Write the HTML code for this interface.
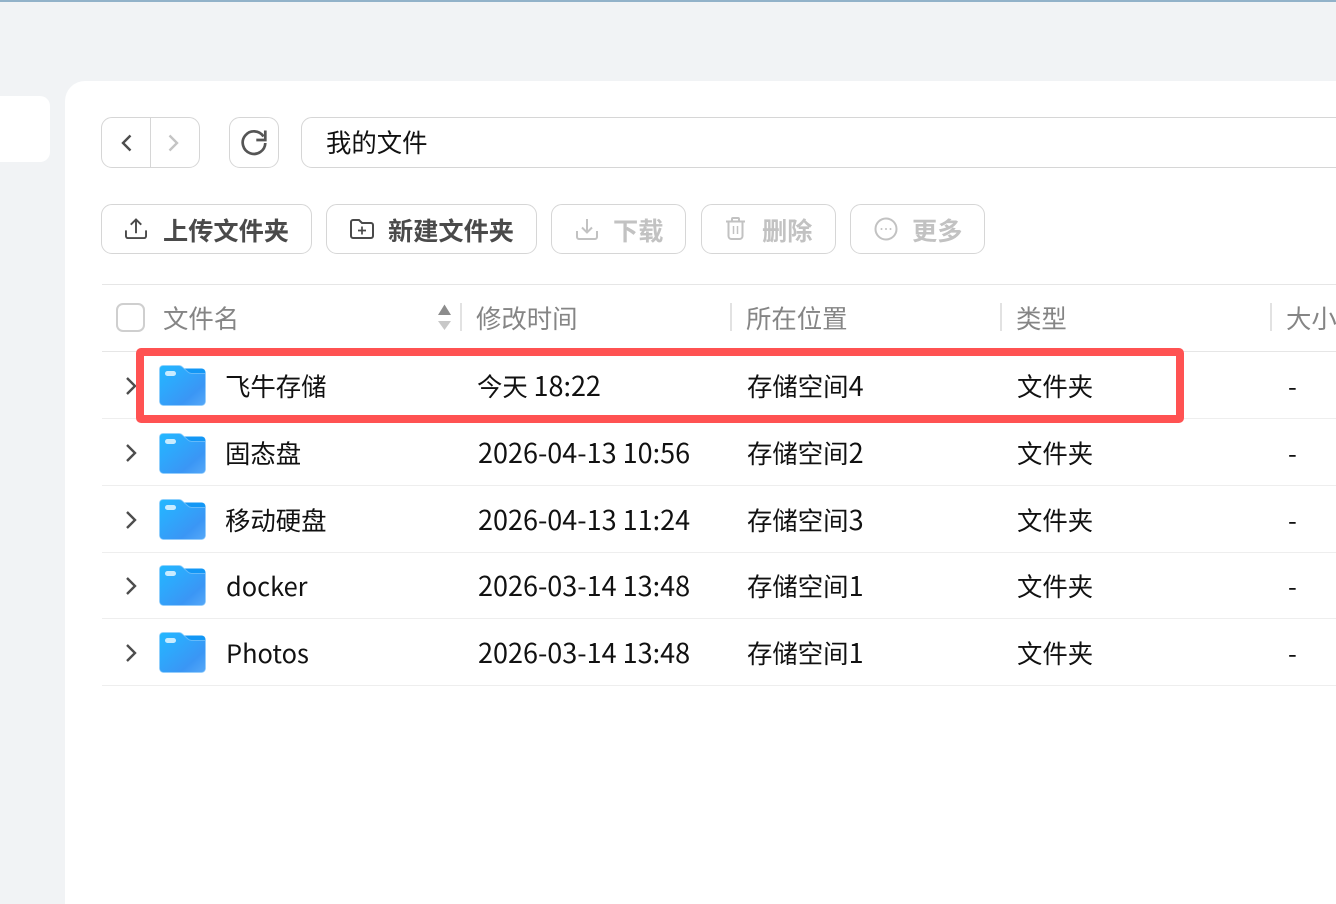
<!DOCTYPE html>
<html lang="zh-CN">
<head>
<meta charset="utf-8">
<title>我的文件</title>
<style>
html,body{margin:0;padding:0;height:904px;overflow:hidden}
body{width:1336px;background:#f1f3f5;position:relative;font-family:"Noto Sans CJK SC","Liberation Sans",sans-serif;color:#111}
#p{position:absolute;left:0;top:0;width:1336px;height:904px;overflow:hidden}
.a{position:absolute}
.t{position:absolute;white-space:nowrap;font-size:25.4px;line-height:34px;height:34px}
.n{font-size:27px;line-height:1}
.t.n{line-height:34px}
.btn{font-weight:700;color:#4a4a4a;font-size:25.2px}
.box{position:absolute;box-sizing:border-box;border:1px solid #d6d6d6;border-radius:11px;background:#fff}
.dis{color:#c2c2c2}
.h{color:#858585}
.line{position:absolute;left:102px;width:1234px;height:1px;background:#eeeeee}
.sep{position:absolute;top:303px;width:2px;height:28px;background:#e2e2e2}
svg{position:absolute;overflow:visible}
</style>
</head>
<body>
<div id="p">
<svg width="0" height="0" style="position:absolute">
<defs>
<linearGradient id="fg" x1="0" y1="0" x2="1" y2="1">
<stop offset="0" stop-color="#22b8ff"/>
<stop offset=".35" stop-color="#2ea8fc"/>
<stop offset=".72" stop-color="#3a96f5"/>
<stop offset="1" stop-color="#56a8f8"/>
</linearGradient>
<symbol id="folder" viewBox="0 0 47 41">
<path d="M24 3.500H42.500a4 4 0 0 1 4 4v6H24z" fill="#1397f5"/>
<path d="M4 .5H20c1.500 0 2.500.5 3.500 1.500L29 7c1.200 1 2.200 1.500 3.500 1.500H46.500V36.500a4 4 0 0 1-4 4H4.500a4 4 0 0 1-4-4V4a3.500 3.500 0 0 1 3.500-3.500z" fill="url(#fg)" stroke="#8fcdfc" stroke-opacity=".6"/>
<rect x="6" y="6" width="11" height="5" rx="2.500" fill="#c8ecff"/>
</symbol>
<symbol id="chev" viewBox="0 0 12 20">
<path d="M2 2l8 8-8 8" fill="none" stroke="#4d4d4d" stroke-width="2.400"/>
</symbol>
</defs>
</svg>

<div class="a" style="left:0;top:0;width:1336px;height:2px;background:#92b2c9"></div>
<div class="a" style="left:-20px;top:96px;width:70px;height:66px;background:#fff;border-radius:10px"></div>
<div class="a" style="left:65px;top:81px;width:1271px;height:823px;background:#fff;border-radius:20px 0 0 0"></div>

<!-- nav -->
<div class="box" style="left:101px;top:117px;width:99px;height:51px"></div>
<div class="a" style="left:150px;top:117px;width:1px;height:51px;background:#d6d6d6"></div>
<svg style="left:121px;top:134px" width="11" height="18" viewBox="0 0 11 18"><path d="M9.500 1.500L2 9l7.500 7.500" fill="none" stroke="#4d4d4d" stroke-width="2.400"/></svg>
<svg style="left:168px;top:134px" width="11" height="18" viewBox="0 0 11 18"><path d="M1.500 1.500L9 9l-7.500 7.500" fill="none" stroke="#c4c4c4" stroke-width="2.400"/></svg>
<div class="box" style="left:229px;top:117px;width:50px;height:51px"></div>
<svg style="left:241px;top:129px" width="26" height="27" viewBox="0 0 26 27" fill="none" stroke="#555" stroke-width="2.700"><path d="M22.500 7.500A11.300 11.300 0 1 0 24.300 14"/><path d="M24.300 1.500v9.500h-9"/></svg>
<div class="box" style="left:301px;top:117px;width:1100px;height:51px"></div>
<div class="t" style="left:326px;top:125px">我的文件</div>

<!-- toolbar -->
<div class="box" style="left:101px;top:204px;width:211px;height:50px"></div>
<svg style="left:125px;top:218px" width="22" height="22" viewBox="0 0 23 23" fill="none" stroke="#4a4a4a" stroke-width="2"><path d="M1 13v6a2 2 0 0 0 2 2h17a2 2 0 0 0 2-2v-6"/><path d="M11.500 16V2M6 7l5.500-5.500L17 7"/></svg>
<div class="t btn" style="left:163px;top:213px">上传文件夹</div>

<div class="box" style="left:326px;top:204px;width:211px;height:50px"></div>
<svg style="left:350px;top:219px" width="24" height="20" viewBox="0 0 24 20" fill="none" stroke="#4a4a4a" stroke-width="2"><path d="M1 3a2 2 0 0 1 2-2h6l3 3h9a2 2 0 0 1 2 2v11a2 2 0 0 1-2 2H3a2 2 0 0 1-2-2z"/><path d="M12 7.500v8M8 11.500h8" stroke-width="1.700"/></svg>
<div class="t btn" style="left:388px;top:213px">新建文件夹</div>

<div class="box" style="left:551px;top:204px;width:135px;height:50px"></div>
<svg style="left:576px;top:218px" width="22" height="22" viewBox="0 0 22 22" fill="none" stroke="#c2c2c2" stroke-width="2"><path d="M1 13v6a2 2 0 0 0 2 2h16a2 2 0 0 0 2-2v-6"/><path d="M11 1v13M6 9.500l5 5 5-5"/></svg>
<div class="t btn dis" style="left:613px;top:213px">下载</div>

<div class="box" style="left:701px;top:204px;width:135px;height:50px"></div>
<svg style="left:725px;top:217px" width="21" height="23" viewBox="0 0 21 23" fill="none" stroke="#c2c2c2" stroke-width="2"><path d="M1 4.500h19M7 4.500V2a1 1 0 0 1 1-1h5a1 1 0 0 1 1 1v2.500"/><path d="M3.500 4.500V19a3 3 0 0 0 3 3h8a3 3 0 0 0 3-3V4.500"/><path d="M8.500 9v8M12.500 9v8" stroke-width="1.500"/></svg>
<div class="t btn dis" style="left:762px;top:213px">删除</div>

<div class="box" style="left:850px;top:204px;width:135px;height:50px"></div>
<svg style="left:874px;top:217px" width="24" height="24" viewBox="0 0 24 24" fill="none" stroke="#c2c2c2"><circle cx="12" cy="12" r="10.500" stroke-width="2"/><circle cx="7.500" cy="12" r="1" fill="#c2c2c2" stroke="none"/><circle cx="12" cy="12" r="1" fill="#c2c2c2" stroke="none"/><circle cx="16.500" cy="12" r="1" fill="#c2c2c2" stroke="none"/></svg>
<div class="t btn dis" style="left:912px;top:213px">更多</div>

<!-- header -->
<div class="line" style="top:284px;background:#e6e6e6"></div>
<div class="a" style="left:116px;top:303px;width:29px;height:29px;box-sizing:border-box;border:2px solid #cfcfcf;border-radius:7px;background:#fff"></div>
<div class="t h" style="left:163px;top:301px">文件名</div>
<svg style="left:438px;top:304px" width="13" height="26" viewBox="0 0 13 26"><path d="M6.500 .5L13 11H0z" fill="#8c8c8c"/><path d="M0 17h13L6.500 26z" fill="#c8c8c8"/></svg>
<div class="sep" style="left:460px"></div>
<div class="t h" style="left:476px;top:301px">修改时间</div>
<div class="sep" style="left:730px"></div>
<div class="t h" style="left:746px;top:301px">所在位置</div>
<div class="sep" style="left:1000px"></div>
<div class="t h" style="left:1016px;top:301px">类型</div>
<div class="sep" style="left:1270px"></div>
<div class="t h" style="left:1286px;top:301px">大小</div>

<div class="line" style="top:351px;background:#e6e6e6"></div>
<div class="line" style="top:418px"></div>
<div class="line" style="top:485px"></div>
<div class="line" style="top:552px"></div>
<div class="line" style="top:618px"></div>
<div class="line" style="top:685px"></div>

<!-- row 1 -->
<svg style="left:125px;top:376px" width="12" height="20"><use href="#chev"/></svg>
<svg style="left:159px;top:365px" width="47" height="41"><use href="#folder"/></svg>
<div class="t" style="left:225px;top:368.500px">飞牛存储</div>
<div class="t" style="left:477px;top:368.500px">今天 <span class="n">18:22</span></div>
<div class="t" style="left:747px;top:368.500px">存储空间<span class="n">4</span></div>
<div class="t" style="left:1017px;top:368.500px">文件夹</div>
<div class="t" style="left:1288px;top:368.500px">-</div>

<!-- row 2 -->
<svg style="left:125px;top:443px" width="12" height="20"><use href="#chev"/></svg>
<svg style="left:159px;top:433px" width="47" height="41"><use href="#folder"/></svg>
<div class="t" style="left:225px;top:435.500px">固态盘</div>
<div class="t n" style="left:478px;top:435px">2026-04-13 10:56</div>
<div class="t" style="left:747px;top:435.500px">存储空间<span class="n">2</span></div>
<div class="t" style="left:1017px;top:435.500px">文件夹</div>
<div class="t" style="left:1288px;top:435.500px">-</div>

<!-- row 3 -->
<svg style="left:125px;top:510px" width="12" height="20"><use href="#chev"/></svg>
<svg style="left:159px;top:499px" width="47" height="41"><use href="#folder"/></svg>
<div class="t" style="left:225px;top:502.500px">移动硬盘</div>
<div class="t n" style="left:478px;top:502px">2026-04-13 11:24</div>
<div class="t" style="left:747px;top:502.500px">存储空间<span class="n">3</span></div>
<div class="t" style="left:1017px;top:502.500px">文件夹</div>
<div class="t" style="left:1288px;top:502.500px">-</div>

<!-- row 4 -->
<svg style="left:125px;top:576px" width="12" height="20"><use href="#chev"/></svg>
<svg style="left:159px;top:565px" width="47" height="41"><use href="#folder"/></svg>
<div class="t" style="left:226px;top:568.500px">docker</div>
<div class="t n" style="left:478px;top:568px">2026-03-14 13:48</div>
<div class="t" style="left:747px;top:568.500px">存储空间<span class="n">1</span></div>
<div class="t" style="left:1017px;top:568.500px">文件夹</div>
<div class="t" style="left:1288px;top:568.500px">-</div>

<!-- row 5 -->
<svg style="left:125px;top:643px" width="12" height="20"><use href="#chev"/></svg>
<svg style="left:159px;top:632px" width="47" height="41"><use href="#folder"/></svg>
<div class="t" style="left:226px;top:635.500px">Photos</div>
<div class="t n" style="left:478px;top:635px">2026-03-14 13:48</div>
<div class="t" style="left:747px;top:635.500px">存储空间<span class="n">1</span></div>
<div class="t" style="left:1017px;top:635.500px">文件夹</div>
<div class="t" style="left:1288px;top:635.500px">-</div>

<!-- highlight -->
<div class="a" style="left:136px;top:348px;width:1048px;height:75px;box-sizing:border-box;border:8px solid #ff5252;border-radius:5px"></div>
</div>
</body>
</html>
